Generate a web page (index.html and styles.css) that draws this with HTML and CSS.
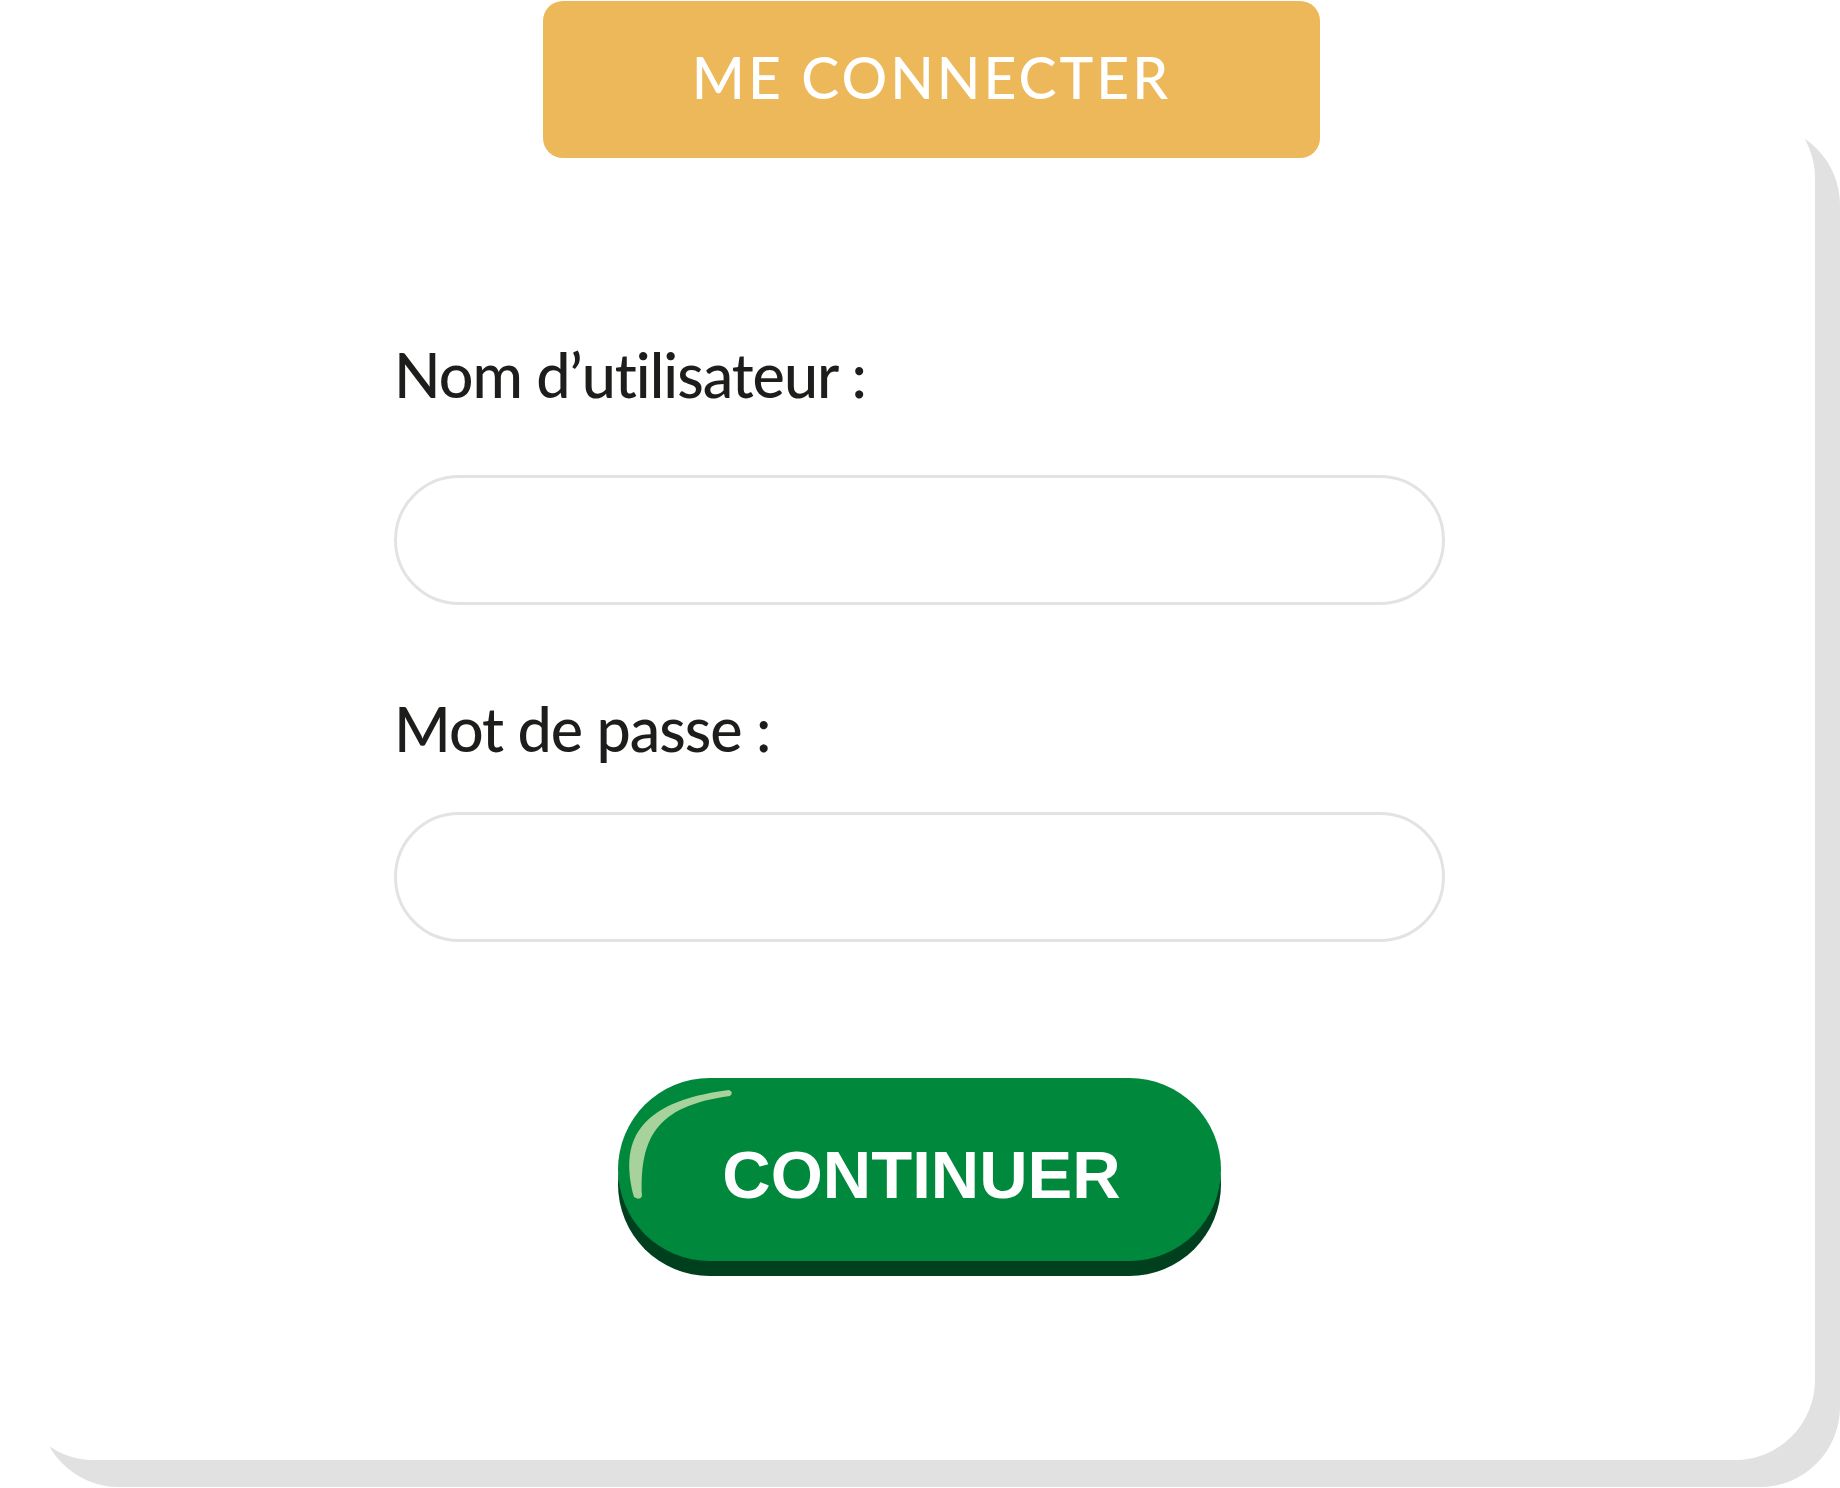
FILE: index.html
```html
<!DOCTYPE html>
<html lang="fr">
<head>
<meta charset="utf-8">
<title>Me connecter</title>
<link rel="stylesheet" href="styles.css">
</head>
<body>
<div class="page">
  <div class="card">
    <div class="tab"><span class="tab-text">ME CONNECTER</span></div>
    <form class="form">
      <label class="label label-user" for="user">Nom d’utilisateur :</label>
      <input class="field" id="user" type="text">
      <label class="label label-pass" for="pass">Mot de passe :</label>
      <input class="field" id="pass" type="password">
      <button class="btn" type="button">
        <svg class="shine" width="130" height="130" viewBox="0 0 130 130" aria-hidden="true">
          <path d="M16 119 C 2 66, 16 24, 111 12 Q 116 14, 112 18 C 36 28, 22 62, 24 118 Q 22 123, 16 119 Z" fill="#a8d29b"/>
        </svg>
        <span class="btn-text">CONTINUER</span>
      </button>
    </form>
  </div>
</div>
</body>
</html>
```

FILE: styles.css
```css
html, body {
  margin: 0;
  padding: 0;
  background: #ffffff;
}

.page {
  width: 1840px;
  height: 1488px;
  overflow: hidden;
  position: relative;
}

.card {
  margin-top: 98px;
  margin-left: 14px;
  width: 1801px;
  height: 1362px;
  background: #ffffff;
  border-radius: 80px;
  box-shadow: 25px 27px 0 #e1e1e1;
  display: flex;
  flex-direction: column;
}

.tab {
  margin-top: -97px;
  margin-left: 529px;
  width: 777px;
  height: 157px;
  box-sizing: border-box;
  background: #ecb85a;
  border-radius: 20px;
  color: #ffffff;
  font-family: "Lato", "Open Sans", sans-serif;
  font-size: 57px;
  font-weight: 500;
  letter-spacing: 3px;
  display: flex;
  align-items: center;
  justify-content: center;
}

.tab-text {
  position: relative;
  top: -3px;
}

.form {
  margin-left: 380px;
  width: 1051px;
  display: flex;
  flex-direction: column;
}

.label {
  font-family: "Lato", "Open Sans", sans-serif;
  font-size: 61px;
  font-weight: 500;
  line-height: 61px;
  letter-spacing: -1px;
  font-variant-ligatures: none;
  color: #1d1d1b;
}

.label-user {
  margin-top: 186px;
}

.label-pass {
  margin-top: 93px;
}

.field {
  box-sizing: border-box;
  width: 1051px;
  height: 130px;
  border: 3px solid #e3e3e3;
  border-radius: 65px;
  background: #ffffff;
  margin: 0;
  outline: none;
}

.label-user + .field {
  margin-top: 70px;
}

.label-pass + .field {
  margin-top: 53px;
}

.btn {
  position: relative;
  align-self: center;
  margin-top: 136px;
  width: 603px;
  height: 183px;
  border: none;
  padding: 0;
  border-radius: 92px;
  background: #00893d;
  box-shadow: 0 15px 0 #00401e;
  display: flex;
  align-items: center;
  justify-content: center;
  cursor: pointer;
}

.shine {
  position: absolute;
  left: 0;
  top: 0;
}

.btn-text {
  position: relative;
  top: 5px;
  left: 2px;
  color: #ffffff;
  font-family: "Liberation Sans", Arial, sans-serif;
  font-weight: bold;
  font-size: 67px;
}
```
